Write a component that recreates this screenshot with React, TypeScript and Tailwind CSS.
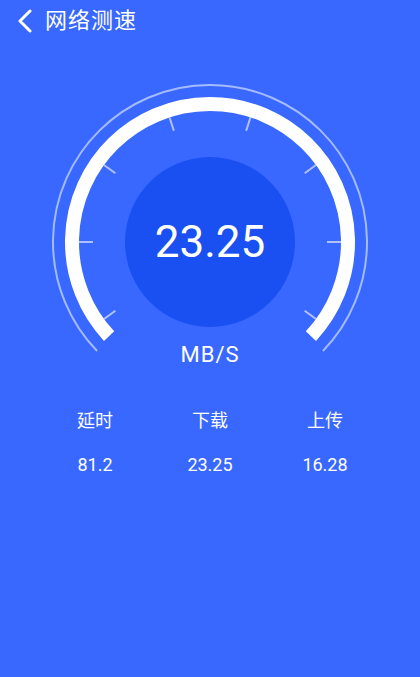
import React from "react";

const CX = 210;
const CY = 172;

function polar(r: number, degFromLeft: number) {
  const a = (Math.PI * degFromLeft) / 180;
  return { x: CX - r * Math.cos(a), y: CY - r * Math.sin(a) };
}

function arcPath(r: number, startDeg: number, endDeg: number) {
  const s = polar(r, startDeg);
  const e = polar(r, endDeg);
  const large = endDeg - startDeg > 180 ? 1 : 0;
  return `M ${s.x} ${s.y} A ${r} ${r} 0 ${large} 1 ${e.x} ${e.y}`;
}

function Gauge() {
  const ticks = [-36, 0, 36, 72, 108, 144, 180, 216];
  return (
    <svg className="absolute inset-0" width="420" height="300" viewBox="0 0 420 300">
      <path d={arcPath(157, -44, 224)} fill="none" stroke="rgba(255,255,255,0.55)" strokeWidth="2" />
      <path d={arcPath(138, -43, 223)} fill="none" stroke="#ffffff" strokeWidth="14" />
      {ticks.map((t) => {
        const a = polar(131, t);
        const b = polar(117, t);
        return (
          <line key={t} x1={a.x} y1={a.y} x2={b.x} y2={b.y} stroke="rgba(255,255,255,0.6)" strokeWidth="2" />
        );
      })}
    </svg>
  );
}

export default function App() {
  const stats = [
    { label: "延时", value: "81.2" },
    { label: "下载", value: "23.25" },
    { label: "上传", value: "16.28" },
  ];
  return (
    <div
      className="w-[420px] h-[677px] bg-[#3868ff] text-white overflow-hidden"
      style={{ fontFamily: 'Roboto, "Noto Sans CJK SC", sans-serif' }}
    >
      <div className="flex items-center h-[42px] pl-[16px] gap-[11px]">
        <svg width="18" height="24" viewBox="0 0 18 24">
          <path d="M14 2 L4 12 L14 22" fill="none" stroke="#fff" strokeWidth="3" strokeLinecap="round" strokeLinejoin="round" />
        </svg>
        <span className="text-[22px] leading-none tracking-[1px]">网络测速</span>
      </div>
      <div className="relative h-[300px] mt-[28px]">
        <Gauge />
        <div className="relative flex flex-col items-center pt-[87px]">
          <div className="w-[170px] h-[170px] rounded-full bg-[#1a4ff2] flex items-center justify-center">
            <span className="text-[44px] leading-none">23.25</span>
          </div>
          <span className="mt-[15px] text-[22px] leading-[26px] tracking-[1px]">MB/S</span>
        </div>
      </div>
      <div className="grid grid-cols-3 w-[345px] mx-auto mt-[38px]">
        {stats.map((s) => (
          <div key={s.label} className="flex flex-col items-center">
            <span className="text-[18px] leading-[26px]">{s.label}</span>
            <span className="mt-[18px] text-[18px] leading-[26px]">{s.value}</span>
          </div>
        ))}
      </div>
    </div>
  );
}
